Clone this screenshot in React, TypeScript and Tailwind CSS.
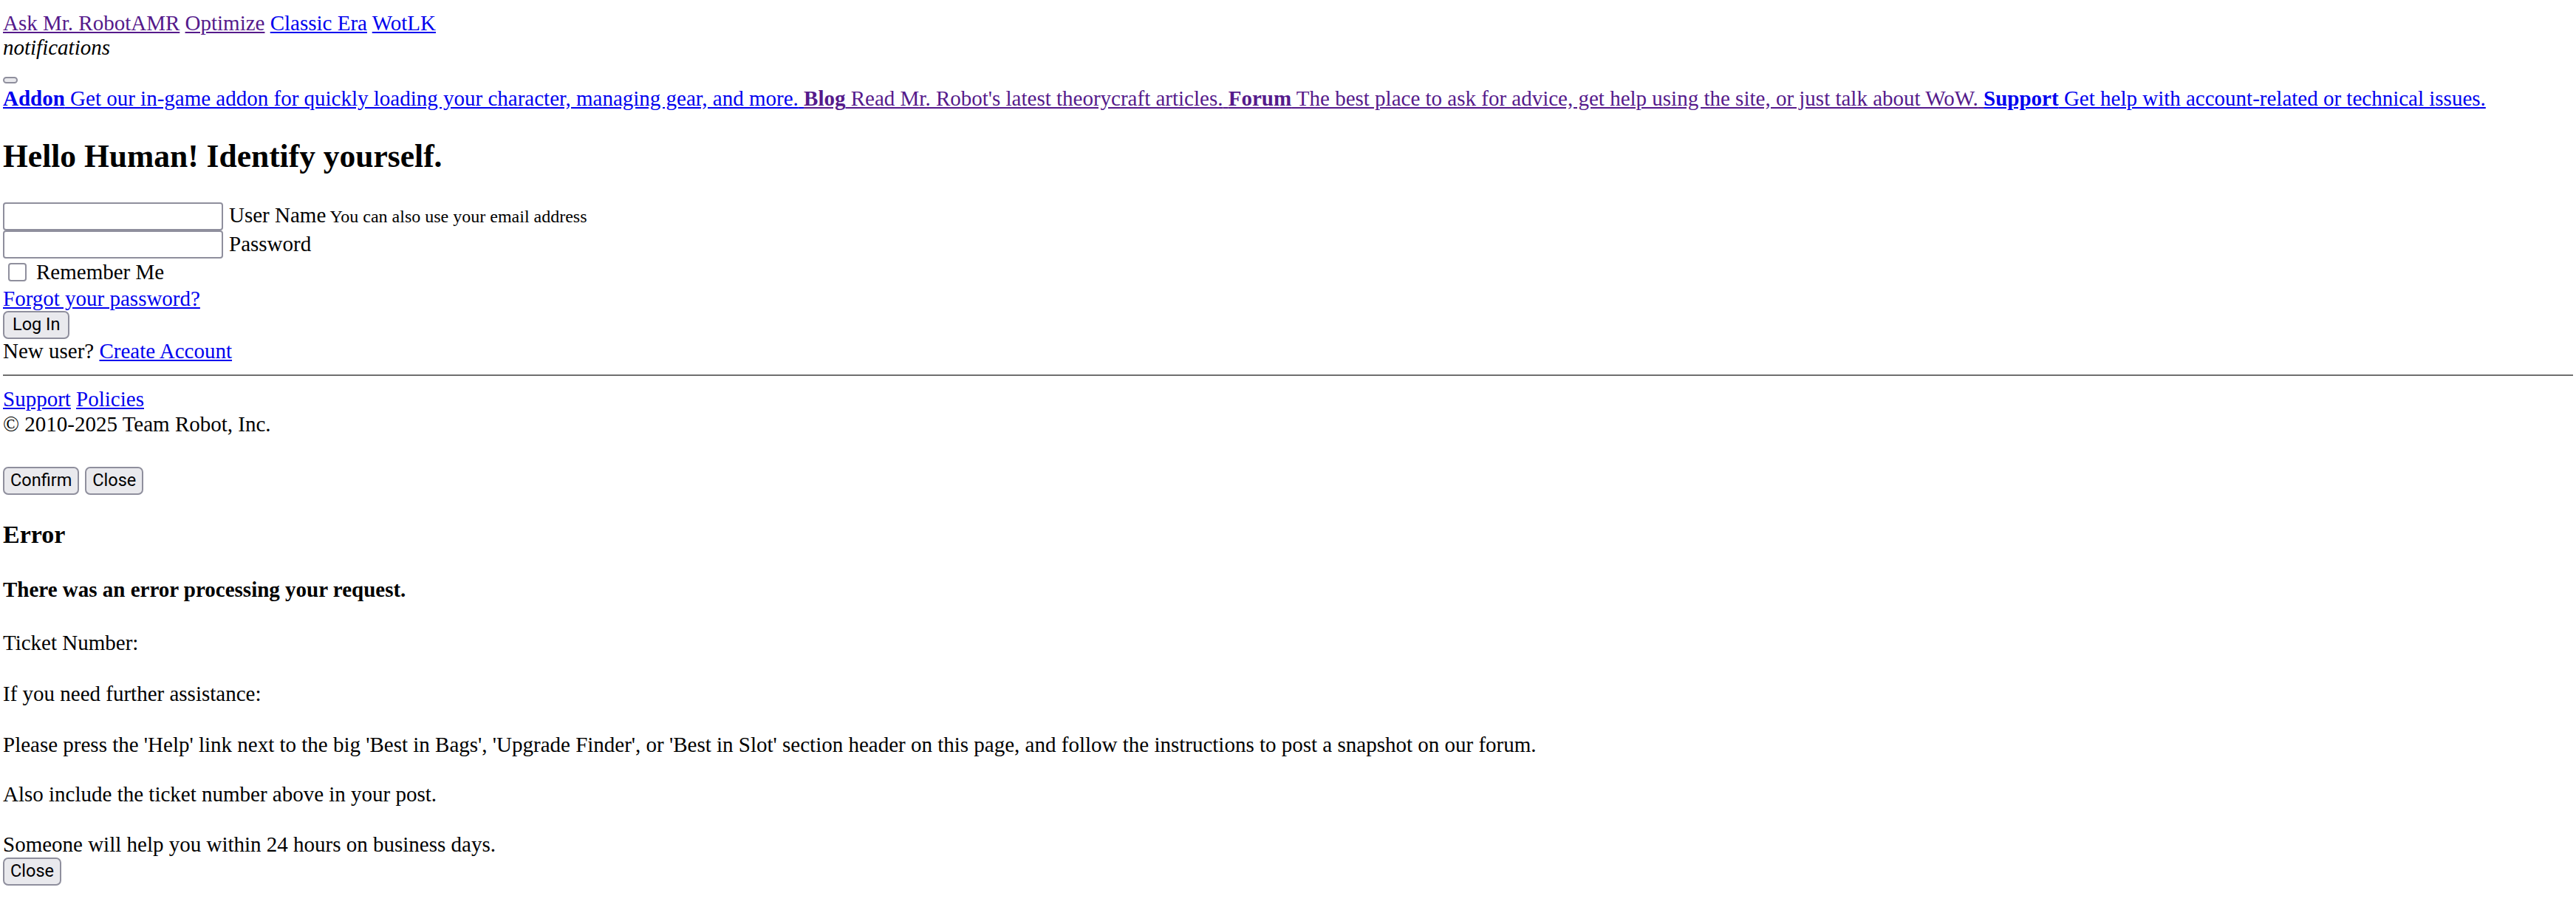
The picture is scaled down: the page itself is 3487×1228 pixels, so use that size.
import React from "react";

const visited = "text-[#551a8b] underline decoration-[#551a8b]";
const fresh = "text-[#0000ee] underline decoration-[#0000ee]";

function Btn({ label, className = "px-[8px]" }: { label: string; className?: string }) {
  return (
    <button
      type="button"
      className={`inline-flex items-center h-[38px] bg-[#e9e9ed] border-2 border-[#8f8f9d] rounded-[7px] font-['Roboto',sans-serif] text-[23.5px] leading-none text-black ${className}`}
    >
      {label}
    </button>
  );
}

function Field({ type, label, hint }: { type: string; label: string; hint?: string }) {
  return (
    <div className="flex items-center h-[38px]">
      <input
        type={type}
        className="w-[298px] h-[38px] bg-white border-2 border-[#8f8f9d] rounded-[4px]"
      />
      <span className="ml-[8px] whitespace-pre">
        {label}
        {hint && <small className="text-[24px]"> {hint}</small>}
      </span>
    </div>
  );
}

export default function App() {
  return (
    <div className="min-h-screen bg-white text-black font-['Liberation_Serif','Times_New_Roman',serif] text-[29px] leading-[33.3px] pt-[15px] px-[4px]">
      {/* top nav */}
      <div>
        <a className={visited}>Ask Mr. RobotAMR</a> <a className={visited}>Optimize</a>{" "}
        <a className={fresh}>Classic Era</a> <a className={fresh}>WotLK</a>
      </div>
      <div className="italic">notifications</div>

      <div className="mt-[22px] h-[9px] flex">
        <button type="button" className="w-[20px] h-[9px] bg-[#e9e9ed] border-2 border-[#8f8f9d] rounded-[5px]" />
      </div>

      <div className="mt-[4px] whitespace-nowrap">
        <a className={fresh}>
          <b>Addon</b> Get our in-game addon for quickly loading your character, managing gear, and more.{" "}
        </a>
        <a className={visited}>
          <b>Blog</b> Read Mr. Robot's latest theorycraft articles.{" "}
        </a>
        <a className={visited}>
          <b>Forum</b> The best place to ask for advice, get help using the site, or just talk about WoW.{" "}
        </a>
        <a className={fresh}>
          <b>Support</b> Get help with account-related or technical issues.
        </a>
      </div>

      <h2 className="mt-[36px] mb-[38px] text-[43.5px] leading-[50px] font-bold">Hello Human! Identify yourself.</h2>

      {/* login form */}
      <form>
        <Field type="text" label="User Name" hint="You can also use your email address" />
        <Field type="password" label="Password" />
        <div className="flex items-center h-[38px]">
          <input
            type="checkbox"
            className="appearance-none ml-[7px] w-[25px] h-[25px] bg-white border-2 border-[#8f8f9d] rounded-[4px]"
          />
          <span className="ml-[13px]">Remember Me</span>
        </div>
        <div>
          <a className={fresh}>Forgot your password?</a>
        </div>
        <div className="h-[38px]">
          <Btn label="Log In" className="px-[11px]" />
        </div>
        <div>
          New user? <a className={fresh}>Create Account</a>
        </div>
      </form>

      <hr className="mt-[15px] mb-[15px] border-0 border-t-2 border-[#6f6f6f]" />

      <div>
        <a className={fresh}>Support</a> <a className={fresh}>Policies</a>
      </div>
      <div>© 2010-2025 Team Robot, Inc.</div>

      {/* confirm dialog */}
      <div className="mt-[41px] flex gap-[8px]">
        <Btn label="Confirm" />
        <Btn label="Close" />
      </div>

      {/* error dialog */}
      <h3 className="mt-[34px] text-[34px] leading-[39px] font-bold">Error</h3>
      <h4 className="mt-[38.6px] font-bold">There was an error processing your request.</h4>
      <p className="mt-[38.6px]">Ticket Number:</p>
      <p className="mt-[36.4px]">If you need further assistance:</p>
      <p className="mt-[35px]">
        Please press the 'Help' link next to the big 'Best in Bags', 'Upgrade Finder', or 'Best in Slot' section header
        on this page, and follow the instructions to post a snapshot on our forum.
      </p>
      <p className="mt-[34.5px]">Also include the ticket number above in your post.</p>
      <p className="mt-[34.7px]">Someone will help you within 24 hours on business days.</p>
      <div>
        <Btn label="Close" />
      </div>
    </div>
  );
}
